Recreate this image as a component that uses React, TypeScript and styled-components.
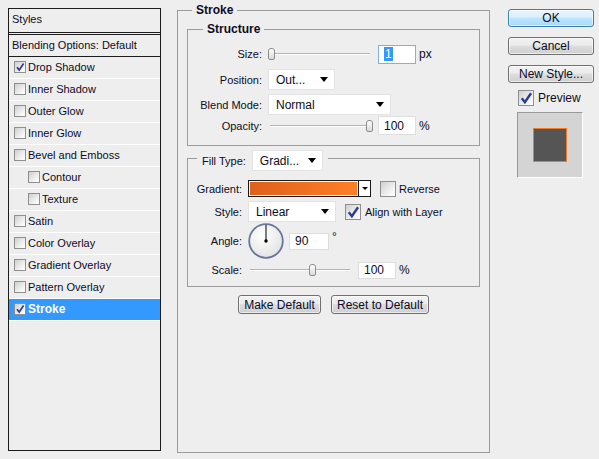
import React from "react";
import styled, { createGlobalStyle } from "styled-components";

const GlobalStyle = createGlobalStyle`
  html, body { margin: 0; padding: 0; background: #eeeeee; }
  body {
    font-family: "Liberation Sans", Arial, sans-serif;
    font-size: 11px;
    color: #0c0c26;
  }
  #root { width: 599px; height: 459px; overflow: hidden; }
`;

const Dialog = styled.div`
  width: 599px;
  height: 459px;
  box-sizing: border-box;
  display: flex;
  align-items: flex-start;
  padding-left: 8px;
  background: #eeeeee;
`;

/* ---------- left: list of layer effects ---------- */

const StylesPanel = styled.div`
  margin-top: 8px;
  width: 153px;
  height: 443px;
  box-sizing: border-box;
  border: 1px solid #1c1c1c;
  display: flex;
  flex-direction: column;
`;

const PanelTitle = styled.div`
  height: 26px;
  box-sizing: border-box;
  padding: 0 0 3px 3px;
  display: flex;
  align-items: center;
  border-bottom: 3px double #1c1c1c;
`;

const BlendRow = styled.div`
  height: 22px;
  box-sizing: border-box;
  padding: 0 0 2px 3px;
  display: flex;
  align-items: center;
  border-bottom: 1px solid #1c1c1c;
`;

const EffectRow = styled.div<{ $nested?: boolean; $selected?: boolean }>`
  height: 22px;
  box-sizing: border-box;
  padding: 0 0 1px ${(p) => (p.$nested ? 19 : 5)}px;
  display: flex;
  align-items: center;
  gap: 2px;
  border-bottom: 1px solid #ffffff;
  background: ${(p) => (p.$selected ? "#3399ff" : "transparent")};
  color: ${(p) => (p.$selected ? "#ffffff" : "inherit")};
  font-weight: ${(p) => (p.$selected ? "bold" : "normal")};
  font-size: ${(p) => (p.$selected ? 12 : 11)}px;
`;

/* ---------- checkboxes ---------- */

const CheckBox = styled.span<{ $size: number }>`
  flex: none;
  width: ${(p) => p.$size}px;
  height: ${(p) => p.$size}px;
  box-sizing: border-box;
  border: 1px solid #8e8f8f;
  background: linear-gradient(135deg, #cfcfcf 0%, #f4f4f4 70%, #ffffff 100%);
  display: inline-flex;
  align-items: center;
  justify-content: center;
`;

const Check: React.FC<{ size: number; checked?: boolean }> = ({ size, checked }) => (
  <CheckBox $size={size}>
    {checked && (
      <svg width={size - 2} height={size - 2} viewBox="0 0 10 10">
        <path d="M2 5.2 L4.2 8 L8.6 1.6" fill="none" stroke="#2b3d8f" strokeWidth="1.7" />
      </svg>
    )}
  </CheckBox>
);

/* ---------- group boxes ---------- */

const GroupBox = styled.fieldset<{ $w: number; $h: number }>`
  margin: 0;
  padding: 0;
  min-width: 0;
  width: ${(p) => p.$w}px;
  height: ${(p) => p.$h}px;
  box-sizing: border-box;
  border: 1px solid #9c9c9c;
`;

const MainBox = styled(GroupBox)`
  margin: 3px 0 0 16px;
  display: flex;
  flex-direction: column;
`;

const InnerBox = styled(GroupBox)<{ $top: number }>`
  margin: ${(p) => p.$top}px 0 0 9px;
`;

const GroupTitle = styled.legend<{ $offset: number }>`
  margin-left: ${(p) => p.$offset}px;
  padding: 0 4px;
  font-weight: bold;
  font-size: 12px;
  line-height: 14px;
`;

const FillLegend = styled.legend`
  margin-left: 9px;
  padding: 5px 5px 0 5px;
`;

const LegendInner = styled.span`
  display: flex;
  align-items: center;
  gap: 6px;
`;

const Form = styled.div<{ $top: number }>`
  padding-top: ${(p) => p.$top}px;
  display: flex;
  flex-direction: column;
`;

const FormRow = styled.div<{ $label: number; $h: number }>`
  display: grid;
  grid-template-columns: ${(p) => p.$label}px auto;
  column-gap: 6px;
  align-items: center;
  height: ${(p) => p.$h}px;
`;

const Label = styled.span`
  text-align: right;
  white-space: nowrap;
`;

const Controls = styled.div`
  display: flex;
  align-items: center;
`;

/* ---------- form controls ---------- */

const Select = styled.div<{ $w: number }>`
  width: ${(p) => p.$w}px;
  height: 21px;
  box-sizing: border-box;
  background: #ffffff;
  border: 1px solid #e3e3e3;
  display: flex;
  align-items: center;
  justify-content: space-between;
  padding: 0 6px 0 7px;
  font-size: 12px;
`;

const Arrow = styled.span<{ $w: number; $h: number }>`
  width: 0;
  height: 0;
  border-left: ${(p) => p.$w / 2}px solid transparent;
  border-right: ${(p) => p.$w / 2}px solid transparent;
  border-top: ${(p) => p.$h}px solid #000000;
`;

const Dropdown: React.FC<{ w: number; value: string }> = ({ w, value }) => (
  <Select $w={w}>
    <span>{value}</span>
    <Arrow $w={9} $h={5} />
  </Select>
);

const NumberField = styled.div<{ $w: number; $h: number; $focus?: boolean }>`
  width: ${(p) => p.$w}px;
  height: ${(p) => p.$h}px;
  box-sizing: border-box;
  background: #ffffff;
  border: 1px solid ${(p) => (p.$focus ? "#7fb2e4" : "#dedede")};
  padding-left: 5px;
  display: flex;
  align-items: center;
  font-size: 12px;
`;

const Selection = styled.span`
  background: #3399ff;
  color: #ffffff;
  padding: 0 1px;
`;

const Unit = styled.span<{ $raise?: boolean }>`
  margin-left: 3px;
  font-size: 12px;
  margin-bottom: ${(p) => (p.$raise ? 9 : 0)}px;
`;

const Track = styled.div<{ $w: number }>`
  position: relative;
  width: ${(p) => p.$w}px;
  height: 14px;
  flex: none;
  &::before {
    content: "";
    position: absolute;
    left: 2px;
    right: 2px;
    top: 6px;
    height: 1px;
    background: #b4b4b4;
    border-bottom: 1px solid #ffffff;
  }
`;

const Thumb = styled.span`
  position: absolute;
  top: 1px;
  width: 7px;
  height: 12px;
  box-sizing: border-box;
  margin-left: -3px;
  border: 1px solid #8c8c8c;
  border-radius: 3px 3px 2px 2px;
  background: linear-gradient(180deg, #ffffff, #d9d9d9);
`;

const Slider: React.FC<{ w: number; pct: number }> = ({ w, pct }) => (
  <Track $w={w}>
    <Thumb style={{ left: `${3 + ((w - 6) * pct) / 100}px` }} />
  </Track>
);

const GradientField = styled.div`
  width: 123px;
  height: 17px;
  box-sizing: border-box;
  border: 1px solid #1a1a1a;
  display: flex;
  flex: none;
`;

const GradientSwatch = styled.div`
  flex: 1;
  border: 1px solid #ffffff;
  background: linear-gradient(90deg, #dd601c, #ff7f27);
`;

const GradientArrow = styled.div`
  width: 11px;
  border-left: 1px solid #1a1a1a;
  background: #ffffff;
  display: flex;
  align-items: center;
  justify-content: center;
`;

const Inline = styled.span<{ $gap: number; $left: number }>`
  display: inline-flex;
  align-items: center;
  gap: ${(p) => p.$gap}px;
  margin-left: ${(p) => p.$left}px;
`;

const Spacer = styled.span<{ $w: number }>`
  width: ${(p) => p.$w}px;
  flex: none;
`;

const AngleDial: React.FC<{ deg: number }> = ({ deg }) => {
  const r = (deg * Math.PI) / 180;
  const x = 18 + Math.cos(r) * 16;
  const y = 18 - Math.sin(r) * 16;
  return (
    <svg width="36" height="36" viewBox="0 0 36 36">
      <defs>
        <radialGradient id="dialFill" cx="40%" cy="35%" r="70%">
          <stop offset="0%" stopColor="#ffffff" />
          <stop offset="100%" stopColor="#e2e2e2" />
        </radialGradient>
      </defs>
      <circle cx="18" cy="18" r="16.8" fill="url(#dialFill)" stroke="#66769c" strokeWidth="1.8" />
      <line x1="18" y1="18" x2={x} y2={y} stroke="#000" strokeWidth="1" />
      <circle cx="18" cy="18" r="1.7" fill="#000" />
    </svg>
  );
};

/* ---------- buttons ---------- */

const ButtonRow = styled.div`
  margin-top: 8px;
  display: flex;
  justify-content: center;
  gap: 10px;
`;

const Button = styled.button<{ $w: number; $h?: number; $default?: boolean }>`
  width: ${(p) => p.$w}px;
  height: ${(p) => p.$h ?? 19}px;
  box-sizing: border-box;
  padding: 0;
  font-family: inherit;
  font-size: 12px;
  color: #0c0c26;
  border-radius: 3px;
  border: 1px solid ${(p) => (p.$default ? "#3c7fb1" : "#707070")};
  background: ${(p) =>
    p.$default
      ? "linear-gradient(180deg, #eaf6fd 0%, #d9f0fc 45%, #bee6fd 50%, #a7d9f5 100%)"
      : "linear-gradient(180deg, #f2f2f2 0%, #ebebeb 45%, #dddddd 50%, #cfcfcf 100%)"};
  box-shadow: inset 0 0 0 1px rgba(255, 255, 255, 0.6);
`;

/* ---------- right column ---------- */

const SideColumn = styled.div`
  margin: 9px 0 0 18px;
  width: 86px;
  display: flex;
  flex-direction: column;
  gap: 10px;
`;

const PreviewToggle = styled.div`
  margin: -3px 0 0 10px;
  display: flex;
  align-items: center;
  gap: 4px;
  font-size: 12px;
`;

const PreviewFrame = styled.div`
  margin: -4px 0 0 9px;
  width: 66px;
  height: 66px;
  box-sizing: border-box;
  border-top: 1px solid #9a9a9a;
  border-left: 1px solid #9a9a9a;
  border-right: 1px solid #ffffff;
  border-bottom: 1px solid #ffffff;
  background: #d4d4d4;
  display: flex;
  align-items: center;
  justify-content: center;
`;

const PreviewSquare = styled.div`
  width: 34px;
  height: 34px;
  box-sizing: border-box;
  border: 1px solid #f07a2a;
  background: #555555;
`;

type Effect = { name: string; checked?: boolean; nested?: boolean; selected?: boolean };

const effects: Effect[] = [
  { name: "Drop Shadow", checked: true },
  { name: "Inner Shadow" },
  { name: "Outer Glow" },
  { name: "Inner Glow" },
  { name: "Bevel and Emboss" },
  { name: "Contour", nested: true },
  { name: "Texture", nested: true },
  { name: "Satin" },
  { name: "Color Overlay" },
  { name: "Gradient Overlay" },
  { name: "Pattern Overlay" },
  { name: "Stroke", checked: true, selected: true },
];

export default function App() {
  return (
    <>
      <GlobalStyle />
      <Dialog>
        <StylesPanel>
          <PanelTitle>Styles</PanelTitle>
          <BlendRow>Blending Options: Default</BlendRow>
          {effects.map((e) => (
            <EffectRow key={e.name} $nested={e.nested} $selected={e.selected}>
              <Check size={12} checked={e.checked} />
              <span>{e.name}</span>
            </EffectRow>
          ))}
        </StylesPanel>

        <MainBox $w={313} $h={450}>
          <GroupTitle $offset={14}>Stroke</GroupTitle>

          <InnerBox $w={293} $h={124} $top={5}>
            <GroupTitle $offset={15}>Structure</GroupTitle>
            <Form $top={7}>
              <FormRow $label={74} $h={22}>
                <Label>Size:</Label>
                <Controls>
                  <Slider w={104} pct={0} />
                  <Spacer $w={6} />
                  <NumberField $w={38} $h={19} $focus>
                    <Selection>1</Selection>
                  </NumberField>
                  <Unit>px</Unit>
                </Controls>
              </FormRow>
              <FormRow $label={74} $h={29}>
                <Label>Position:</Label>
                <Controls>
                  <Dropdown w={67} value="Out..." />
                </Controls>
              </FormRow>
              <FormRow $label={74} $h={21}>
                <Label>Blend Mode:</Label>
                <Controls>
                  <Dropdown w={123} value="Normal" />
                </Controls>
              </FormRow>
              <FormRow $label={74} $h={21}>
                <Label>Opacity:</Label>
                <Controls>
                  <Slider w={104} pct={100} />
                  <Spacer $w={6} />
                  <NumberField $w={38} $h={19}>100</NumberField>
                  <Unit>%</Unit>
                </Controls>
              </FormRow>
            </Form>
          </InnerBox>

          <InnerBox $w={293} $h={142} $top={-1}>
            <FillLegend>
              <LegendInner>
                <span>Fill Type:</span>
                <Dropdown w={71} value="Gradi..." />
              </LegendInner>
            </FillLegend>
            <Form $top={6}>
              <FormRow $label={54} $h={23}>
                <Label>Gradient:</Label>
                <Controls>
                  <GradientField>
                    <GradientSwatch />
                    <GradientArrow>
                      <Arrow $w={6} $h={3} />
                    </GradientArrow>
                  </GradientField>
                  <Inline $gap={3} $left={9}>
                    <Check size={16} />
                    <span>Reverse</span>
                  </Inline>
                </Controls>
              </FormRow>
              <FormRow $label={54} $h={23}>
                <Label>Style:</Label>
                <Controls>
                  <Dropdown w={88} value="Linear" />
                  <Inline $gap={4} $left={9}>
                    <Check size={16} checked />
                    <span>Align with Layer</span>
                  </Inline>
                </Controls>
              </FormRow>
              <FormRow $label={54} $h={36}>
                <Label>Angle:</Label>
                <Controls>
                  <AngleDial deg={90} />
                  <Spacer $w={5} />
                  <NumberField $w={40} $h={17}>90</NumberField>
                  <Unit $raise>°</Unit>
                </Controls>
              </FormRow>
              <FormRow $label={54} $h={22}>
                <Label>Scale:</Label>
                <Controls>
                  <Slider w={104} pct={62} />
                  <Spacer $w={6} />
                  <NumberField $w={38} $h={17}>100</NumberField>
                  <Unit>%</Unit>
                </Controls>
              </FormRow>
            </Form>
          </InnerBox>

          <ButtonRow>
            <Button $w={83}>Make Default</Button>
            <Button $w={98}>Reset to Default</Button>
          </ButtonRow>
        </MainBox>

        <SideColumn>
          <Button $w={86} $h={18} $default>
            OK
          </Button>
          <Button $w={86} $h={18}>
            Cancel
          </Button>
          <Button $w={86} $h={18}>
            New Style...
          </Button>
          <PreviewToggle>
            <Check size={16} checked />
            <span>Preview</span>
          </PreviewToggle>
          <PreviewFrame>
            <PreviewSquare />
          </PreviewFrame>
        </SideColumn>
      </Dialog>
    </>
  );
}
